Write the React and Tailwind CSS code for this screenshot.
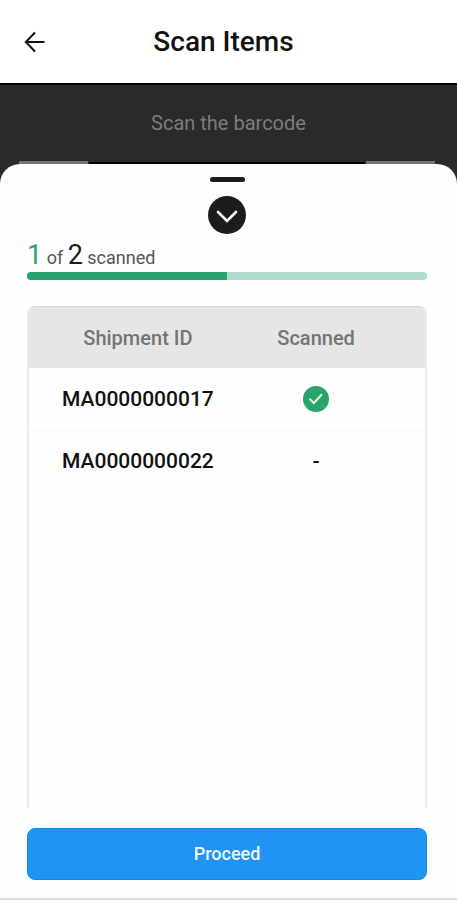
const shipments = [
  { id: 'MA0000000017', scanned: true },
  { id: 'MA0000000022', scanned: false }
]

const BackIcon = () => (
  <svg width="26" height="26" viewBox="0 0 26 26" fill="none" stroke="currentColor" strokeWidth="2">
    <path d="M22.5 13H4M13 3.5L3.8 13l9.2 9.5" />
  </svg>
)

const ScannedIcon = () => (
  <svg className="mx-auto" width="26" height="26" viewBox="0 0 26 26" role="img" aria-label="Scanned">
    <circle cx="13" cy="13" r="13" fill="#27a46a" />
    <path
      d="M6.6 12.8l4.2 4.3 8.2-8.8"
      fill="none"
      stroke="#e8f7ef"
      strokeWidth="2"
    />
  </svg>
)

const Header = () => (
  <header className="flex h-[83px] items-center bg-white px-[22px]">
    <button type="button" aria-label="Back" className="text-[#111111]">
      <BackIcon />
    </button>
    <h1 className="flex-1 pt-px text-center text-[28px] leading-8 font-medium text-[#111111]">Scan Items</h1>
    <div className="w-9" />
  </header>
)

const Scanner = () => (
  <section className="border-t-2 border-black bg-[#2a2a2a] pb-5">
    <p className="py-[22px] text-center text-[20px] leading-8 text-[#7d7d7d]">Scan the barcode</p>
    {/* bottom edge of the viewfinder frame */}
    <div className="flex justify-between pr-[22px] pl-[19px]">
      <div className="h-[3px] w-[69px] bg-[#757575]" />
      <div className="mx-px h-[3px] flex-1 border-b-2 border-black" />
      <div className="h-[3px] w-[69px] bg-[#757575]" />
    </div>
  </section>
)

const Progress = ({ scanned, total }) => (
  <div>
    <p className="text-[18px] leading-7 text-[#555555]">
      <span className="text-[27px] text-[#27a46a]">{scanned}</span> of{' '}
      <span className="text-[27px] text-[#1c1c1c]">{total}</span> scanned
    </p>
    <div className="h-2 overflow-hidden rounded-full bg-[#afdcca]">
      <div className="h-full bg-[#27a46a]" style={{ width: `${(scanned / total) * 100}%` }} />
    </div>
  </div>
)

const ShipmentTable = () => (
  <div className="mt-[26px] flex-1 overflow-hidden rounded-t-lg border-x-2 border-t border-[#ebebeb] border-t-[#d6d6d6]">
    <table className="w-full table-fixed text-center">
      <colgroup>
        <col className="w-[55%]" />
        <col className="w-[35%]" />
        <col />
      </colgroup>
      <thead className="bg-[#e6e6e6] text-[20px] leading-6 text-[#747474]">
        <tr className="h-[61px]">
          <th className="font-medium" scope="col">Shipment ID</th>
          <th className="font-medium" scope="col">Scanned</th>
          <td />
        </tr>
      </thead>
      <tbody className="text-[21px] leading-6 font-medium text-[#111111]">
        {shipments.map((item) => (
          <tr key={item.id} className="h-[62px] border-b border-[#f6f6f6] last:border-b-0">
            <td>{item.id}</td>
            <td>{item.scanned ? <ScannedIcon /> : '-'}</td>
            <td />
          </tr>
        ))}
      </tbody>
    </table>
  </div>
)

const App = () => {
  const scanned = shipments.filter((item) => item.scanned).length

  return (
    <div className="flex min-h-screen flex-col border-b-2 border-[#dedede] bg-white font-['Roboto',sans-serif]">
      <Header />
      <Scanner />
      <main className="relative -mt-5 flex flex-1 flex-col rounded-t-[20px] bg-[#fefefe] pt-[13px] pr-[30px] pb-[18px] pl-[27px]">
        <div className="mx-auto h-[5px] w-[35px] rounded-full bg-[#1c1c1c]" />
        <button
          type="button"
          aria-label="Collapse"
          className="mx-auto mt-[14px] flex size-[38px] items-center justify-center rounded-full bg-[#1c1c1c] pt-1"
        >
          <svg width="22" height="14" viewBox="0 0 22 14" fill="none">
            <path d="M2 2l9 9 9-9" stroke="#ffffff" strokeWidth="2.6" strokeLinecap="round" />
          </svg>
        </button>
        <div className="mt-[7px]">
          <Progress scanned={scanned} total={shipments.length} />
        </div>
        <ShipmentTable />
        <button
          type="button"
          className="mt-5 h-[52px] rounded-lg border border-[#1488e0] bg-[#2094f3] text-[18px] leading-6 font-medium text-[#f0f8ff]"
        >
          Proceed
        </button>
      </main>
    </div>
  )
}

export default App
